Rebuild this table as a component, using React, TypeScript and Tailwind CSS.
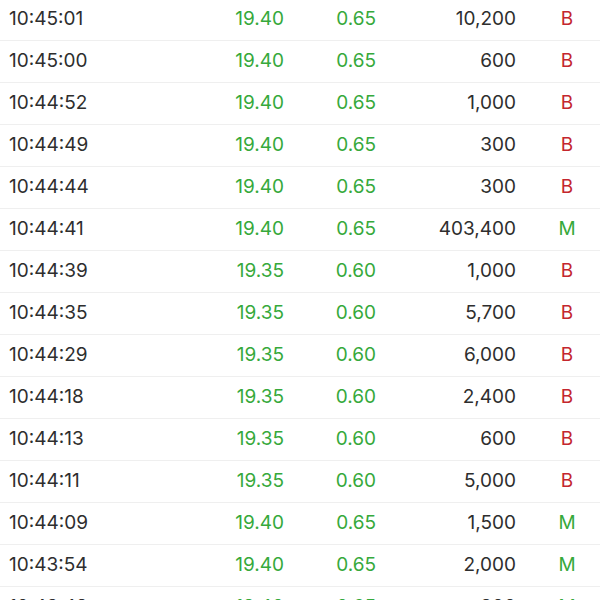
const trades = [
  { t: '10:45:01', p: '19.40', c: '0.65', v: '10,200', k: 'B' },
  { t: '10:45:00', p: '19.40', c: '0.65', v: '600', k: 'B' },
  { t: '10:44:52', p: '19.40', c: '0.65', v: '1,000', k: 'B' },
  { t: '10:44:49', p: '19.40', c: '0.65', v: '300', k: 'B' },
  { t: '10:44:44', p: '19.40', c: '0.65', v: '300', k: 'B' },
  { t: '10:44:41', p: '19.40', c: '0.65', v: '403,400', k: 'M' },
  { t: '10:44:39', p: '19.35', c: '0.60', v: '1,000', k: 'B' },
  { t: '10:44:35', p: '19.35', c: '0.60', v: '5,700', k: 'B' },
  { t: '10:44:29', p: '19.35', c: '0.60', v: '6,000', k: 'B' },
  { t: '10:44:18', p: '19.35', c: '0.60', v: '2,400', k: 'B' },
  { t: '10:44:13', p: '19.35', c: '0.60', v: '600', k: 'B' },
  { t: '10:44:11', p: '19.35', c: '0.60', v: '5,000', k: 'B' },
  { t: '10:44:09', p: '19.40', c: '0.65', v: '1,500', k: 'M' },
  { t: '10:43:54', p: '19.40', c: '0.65', v: '2,000', k: 'M' },
  { t: '10:43:49', p: '19.40', c: '0.65', v: '800', k: 'M' },
]

export default function App() {
  return (
    <div className="h-[600px] w-[600px] overflow-hidden bg-white font-['Inter','Liberation_Sans',sans-serif] text-[19px]">
      <div className="-mt-[1px]">
        {trades.map((r, i) => (
          <div key={i} className="flex h-[42px] items-center border-b border-[#efefef]">
            <div className="w-[200px] pl-[9px] text-[#2e2e2e]">{r.t}</div>
            <div className="w-[84px] text-right text-[#36a93b]">{r.p}</div>
            <div className="w-[92px] text-right text-[#36a93b]">{r.c}</div>
            <div className="w-[140px] text-right text-[#2e2e2e]">{r.v}</div>
            <div className="ml-[36px] w-[30px] text-center">
              <span className={r.k === 'B' ? 'text-[#c4262e]' : 'text-[#36a93b]'}>{r.k}</span>
            </div>
          </div>
        ))}
      </div>
    </div>
  )
}
